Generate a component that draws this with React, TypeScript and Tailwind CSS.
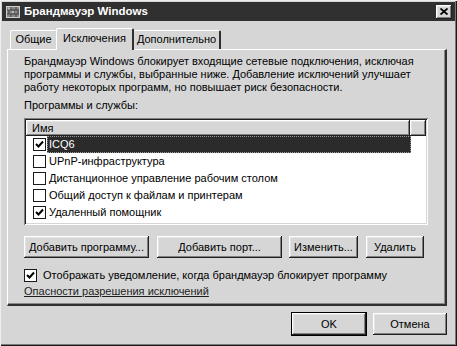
import React from "react";

const raised =
  "shadow-[inset_-1px_-1px_#202020,inset_1px_1px_#ffffff,inset_-2px_-2px_#808080,inset_2px_2px_#e4e4e4]";
const sunken =
  "shadow-[inset_1px_1px_#808080,inset_-1px_-1px_#ffffff,inset_2px_2px_#202020,inset_-2px_-2px_#d6d6d6]";

function Check({ checked }: { checked: boolean }) {
  return (
    <div className="w-[13px] h-[13px] bg-white border border-[#1a1a1a] flex items-center justify-center shrink-0">
      {checked && (
        <svg width="9" height="9" viewBox="0 0 9 9">
          <path d="M1 4 L3.5 6.5 L8 1.5" stroke="#000" strokeWidth="2" fill="none" />
        </svg>
      )}
    </div>
  );
}

function Btn({ label, w, def }: { label: string; w: number; def?: boolean }) {
  return (
    <div
      className={`h-[22px] flex items-center justify-center bg-[#d6d6d6] ${raised} ${
        def ? "outline outline-1 outline-black" : ""
      }`}
      style={{ width: w }}
    >
      {label}
    </div>
  );
}

function FirewallIcon() {
  return (
    <svg width="15" height="14" viewBox="0 0 15 14">
      <rect x="0.5" y="1.5" width="13" height="11" fill="#8a8a8a" stroke="#cfcfcf" />
      <path d="M1 5h12M1 9h12M5 2v3M10 2v3M3 5v4M8 5v4M12 5v4M5 9v3M10 9v3" stroke="#444" strokeWidth="1" />
      <rect x="2" y="2.5" width="2" height="2" fill="#bbb" />
      <rect x="6" y="6" width="2" height="2" fill="#bbb" />
    </svg>
  );
}

const rows = [
  { label: "ICQ6", checked: true, sel: true },
  { label: "UPnP-инфраструктура", checked: false },
  { label: "Дистанционное управление рабочим столом", checked: false },
  { label: "Общий доступ к файлам и принтерам", checked: false },
  { label: "Удаленный помощник", checked: true },
];

export default function App() {
  return (
    <div className="w-[457px] h-[346px] bg-[#d6d6d6] shadow-[inset_1px_1px_#eeeeee,inset_-1px_-1px_#1a1a1a,inset_-2px_-2px_#7a7a7a] flex flex-col font-['Liberation_Sans',Arial,sans-serif] text-[11px] leading-[13px] text-black overflow-hidden">
      {/* title bar */}
      <div className="mx-[2px] mt-[2px] h-[19px] bg-[#303030] flex items-center pl-[4px] pr-[3px]">
        <FirewallIcon />
        <div className="ml-[3px] text-white font-bold text-[11.5px]">Брандмауэр Windows</div>
        <div className="flex-1" />
        <div className={`w-[16px] h-[14px] bg-[#d6d6d6] ${raised} flex items-center justify-center`}>
          <svg width="8" height="7" viewBox="0 0 8 7">
            <path d="M0.5 0.5 L7.5 6.5 M7.5 0.5 L0.5 6.5" stroke="#000" strokeWidth="1.8" />
          </svg>
        </div>
      </div>

      <div className="ml-[7px] w-[440px] mt-[7px] flex flex-col">
        {/* tabs */}
        <div className="h-[21px] flex items-end pl-[3px]">
          <div className="w-[47px] h-[19px] border-t border-l border-white border-r border-r-[#404040] rounded-t-[2px] flex items-center justify-center pb-[1px]">
            Общие
          </div>
          <div className="relative z-10 w-[78px] h-[22px] -mb-[1px] -ml-[1px] bg-[#d6d6d6] border-t border-l border-white border-r-2 border-r-[#303030] rounded-t-[2px] flex items-center justify-center pb-[2px]">
            Исключения
          </div>
          <div className="w-[87px] h-[19px] border-t border-white border-r-2 border-r-[#303030] rounded-t-[2px] flex items-center justify-center pb-[1px]">
            Дополнительно
          </div>
        </div>

        {/* panel */}
        <div className="h-[257px] border-t border-l border-white border-r-2 border-b-2 border-r-[#303030] border-b-[#303030] shadow-[inset_-1px_-1px_#8a8a8a] pl-[16px] pr-[16px] pt-[5px] flex flex-col">
          <div>
            Брандмауэр Windows блокирует входящие сетевые подключения, исключая программы и службы, выбранные ниже. Добавление исключений улучшает работу некоторых программ, но повышает риск безопасности.
          </div>
          <div className="mt-[5px]">Программы и службы:</div>

          {/* list */}
          <div className={`mt-[6px] w-[404px] h-[107px] bg-white ${sunken} p-[2px] flex flex-col`}>
            <div className="h-[16px] flex">
              <div className={`w-[384px] h-full bg-[#d6d6d6] ${raised} flex items-center pl-[6px]`}>Имя</div>
              <div className={`flex-1 h-full bg-[#d6d6d6] ${raised}`} />
            </div>
            {rows.map((r) => (
              <div key={r.label} className="h-[17px] flex items-center pl-[7px]">
                <Check checked={r.checked} />
                <div
                  className={`ml-[1px] h-[17px] flex items-center px-[2px] ${
                    r.sel ? "w-[364px] bg-[#2b2b2b] text-white outline outline-1 outline-dotted outline-[#999] -outline-offset-1" : ""
                  }`}
                >
                  {r.label}
                </div>
              </div>
            ))}
          </div>

          {/* buttons */}
          <div className="mt-[11px] flex">
            <Btn label="Добавить программу..." w={125} />
            <div className="ml-[8px]">
              <Btn label="Добавить порт..." w={125} />
            </div>
            <div className="ml-[7px]">
              <Btn label="Изменить..." w={69} />
            </div>
            <div className="ml-[8px]">
              <Btn label="Удалить" w={58} />
            </div>
          </div>

          <div className="mt-[11px] flex items-center">
            <Check checked={true} />
            <div className="ml-[6px]">Отображать уведомление, когда брандмауэр блокирует программу</div>
          </div>
          <div className="mt-[3px] underline text-[#1e1e1e]">Опасности разрешения исключений</div>
        </div>

        {/* bottom buttons */}
        <div className="mt-[7px] flex justify-end gap-[7px]">
          <Btn label="OK" w={74} def />
          <Btn label="Отмена" w={74} />
        </div>
      </div>
    </div>
  );
}
